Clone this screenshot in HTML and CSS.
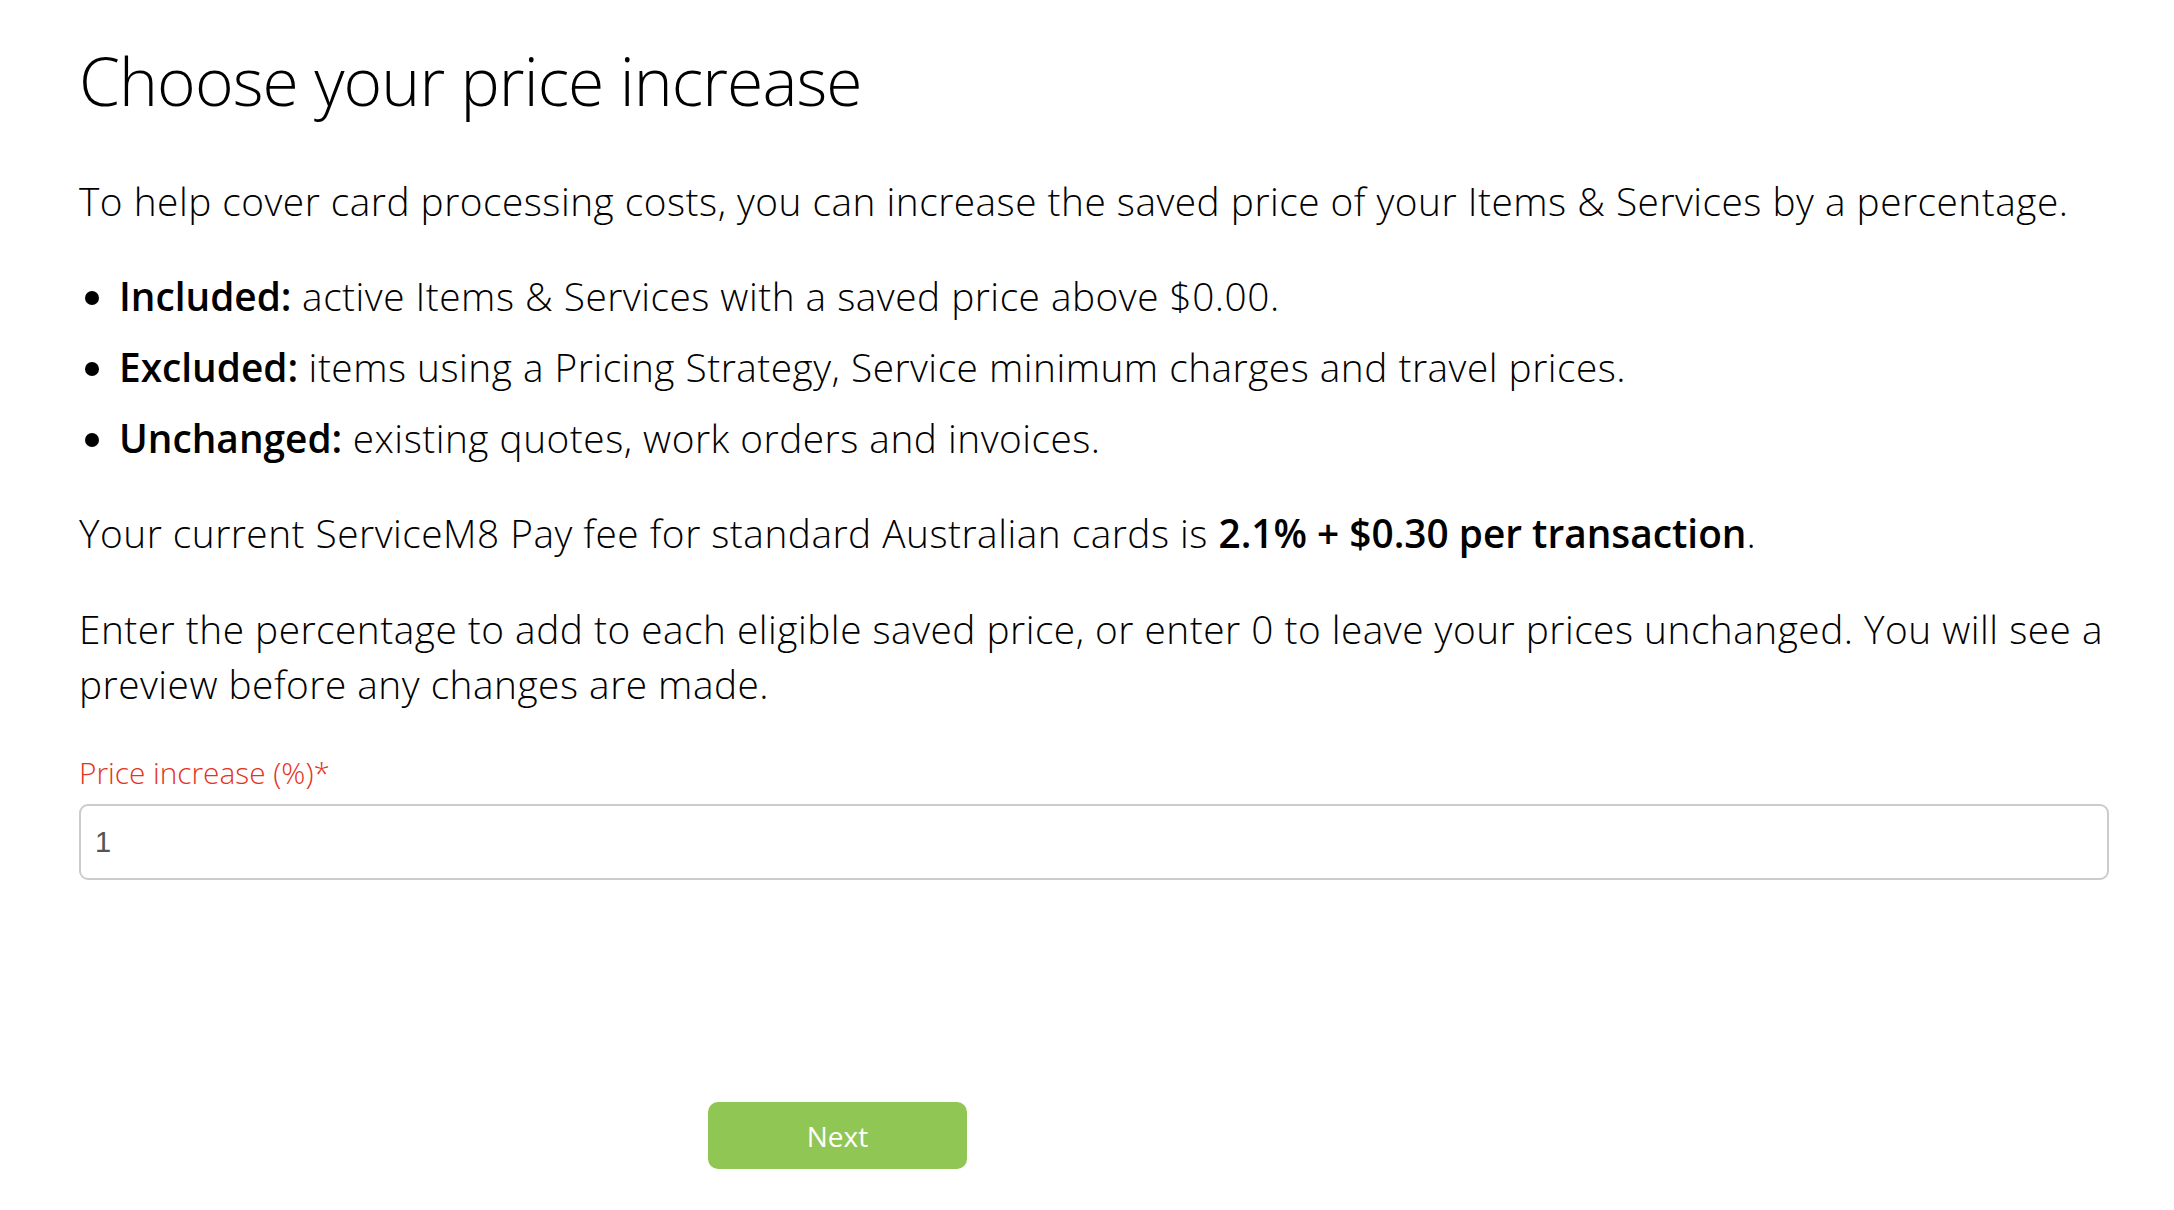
FILE: index.html
```html
<!DOCTYPE html>
<html lang="en">
  <head>
    <meta charset="UTF-8" />
    <title>Choose your price increase</title>
    <link rel="stylesheet" href="styles.css">
  </head>
  <body>
    <div class="page">
      <h1>Choose your price increase</h1>

      <p>To help cover card processing costs, you can increase the saved price of your Items &amp; Services by a percentage.</p>

      <ul class="rules">
        <li><b>Included:</b> active Items &amp; Services with a saved price above $0.00.</li>
        <li><b>Excluded:</b> items using a Pricing Strategy, Service minimum charges and travel prices.</li>
        <li><b>Unchanged:</b> existing quotes, work orders and invoices.</li>
      </ul>

      <p>Your current ServiceM8 Pay fee for standard Australian cards is <b>2.1% + $0.30 per transaction</b>.</p>

      <p>Enter the percentage to add to each eligible saved price, or enter 0 to leave your prices unchanged. You will see a preview before any changes are made.</p>

      <label class="field-label" for="increase">Price increase (%)*</label>
      <input type="text" id="increase" class="field" value="1" />

      <div class="footer">
        <button class="next-btn">Next</button>
      </div>
    </div>
  </body>
</html>
```

FILE: styles.css
```css
body {
  margin: 0;
  background: #ffffff;
  color: #000000;
  font-family: "Open Sans", "Liberation Sans", sans-serif;
  font-size: 38.8px;
  font-weight: 300;
  letter-spacing: 0.5px;
  line-height: 55.4px;
}

.page {
  padding: 42px 65px 0 79px;
}

h1 {
  margin: 0 0 56px 0;
  font-size: 66px;
  font-weight: 300;
  letter-spacing: -0.9px;
  line-height: 76px;
}

p {
  margin: 0 0 40px 0;
}

b {
  font-weight: 600;
  letter-spacing: 0;
}

/* bullet list */
.rules {
  margin: 0 0 40px 0;
  padding-left: 40px;
}
.rules li {
  margin-bottom: 15.4px;
}
.rules li:last-child {
  margin-bottom: 0;
}

/* form field */
.field-label {
  display: block;
  margin-top: -2px;
  color: #e53322;
  font-size: 29.8px;
  letter-spacing: 0;
  line-height: 43.6px;
}

.field {
  display: block;
  box-sizing: border-box;
  width: 100%;
  height: 76px;
  margin-top: 10px;
  padding: 0 14px;
  border: 2px solid #cccccc;
  border-radius: 9px;
  color: #555555;
  font-family: "Liberation Sans", Arial, sans-serif;
  font-size: 29px;
  letter-spacing: 0;
}

/* "Next" button */
.footer {
  padding-top: 222px;
  padding-left: 629px;
}

.next-btn {
  width: 259px;
  height: 67px;
  border: none;
  border-radius: 10px;
  background: #90c653;
  color: #ffffff;
  font-family: "Open Sans", sans-serif;
  font-size: 28px;
  font-weight: 500;
  letter-spacing: 0;
  cursor: pointer;
}
```
